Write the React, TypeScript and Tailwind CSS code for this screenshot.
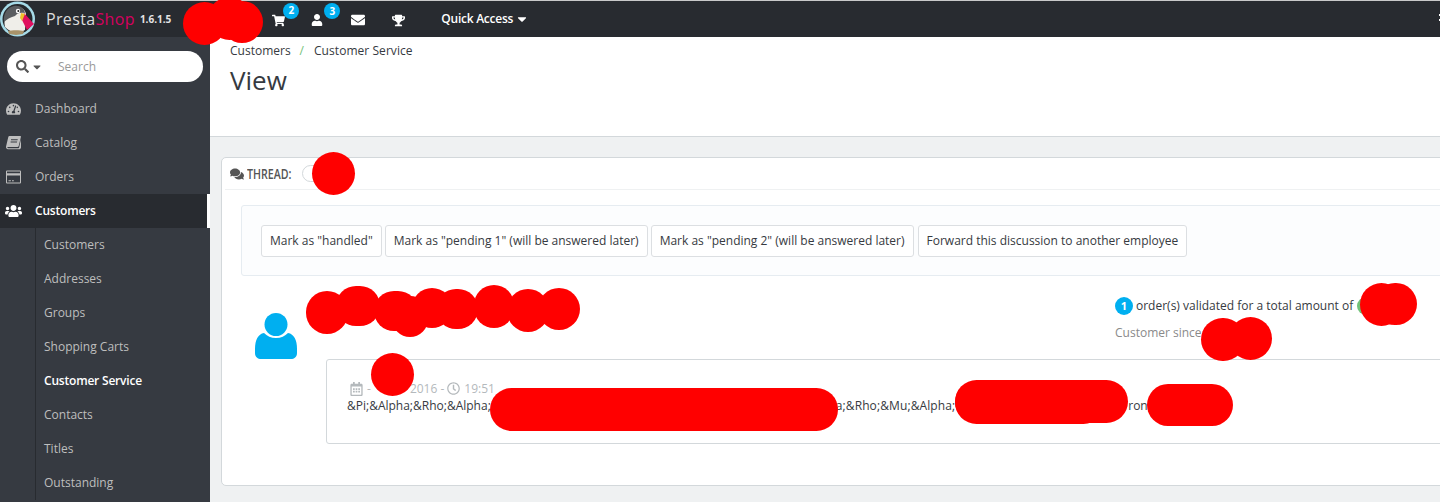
import React from 'react';
import { FaSearch, FaCaretDown, FaShoppingCart, FaUser, FaEnvelope, FaTrophy, FaTachometerAlt, FaUsers, FaComments, FaRegCalendarAlt, FaRegClock } from 'react-icons/fa';

function BookIcon({ className }: { className?: string }) {
  return (
    <svg viewBox="0 0 15 14" className={className} fill="currentColor">
      <path d="M3.4 0h10.8c.6 0 .8.4.7.9l-2.2 9c-.2.7-.6 1-1.3 1H1.9c-.4 0-.6.3-.6.6 0 .4.3.7.8.7h10.2c.4 0 .7-.2.8-.6L15 3.2v8.2c-.2.9-.9 1.8-2 1.8L2 13.200c-1.300 0-2-1-2-2.200 0-.3 0-.5.100-.8L2.300.9C2.500.3 2.800 0 3.400 0zM5 3.200v1h6.500l.3-1H5zM4.600 5.400v1h6.300l.3-1H4.600z" />
    </svg>
  );
}

function CardIcon({ className }: { className?: string }) {
  return (
    <svg viewBox="0 0 15 13" className={className} fill="currentColor">
      <path d="M1 0h13a1 1 0 0 1 1 1v11a1 1 0 0 1-1 1H1a1 1 0 0 1-1-1V1a1 1 0 0 1 1-1zm0 1v1.800h13V1H1zm0 4v7h13V5H1zm1.500 4.800h2.400v1H2.500v-1zm3.500 0h1.800v1H6v-1z" />
    </svg>
  );
}

const mainMenu = [
  { label: 'Dashboard', Icon: FaTachometerAlt },
  { label: 'Catalog', Icon: BookIcon },
  { label: 'Orders', Icon: CardIcon },
];

const subMenu = ['Customers', 'Addresses', 'Groups', 'Shopping Carts', 'Customer Service', 'Contacts', 'Titles', 'Outstanding'];

const actions = [
  'Mark as "handled"',
  'Mark as "pending 1" (will be answered later)',
  'Mark as "pending 2" (will be answered later)',
  'Forward this discussion to another employee',
];

// the red blobs painted over the screenshot: [left, top, width, height]
const blobs = [
  [183, 2, 43, 43], [208, -3, 43, 43], [221, 1, 42, 42],
  [312, 152, 43, 43],
  [306, 291, 42, 43], [336, 286, 44, 40], [374, 291, 44, 40], [392, 296, 36, 41], [412, 288, 40, 40], [436, 289, 42, 40], [474, 285, 40, 43], [507, 289, 42, 43], [538, 288, 42, 42],
  [371, 353, 43, 43],
  [490, 388, 348, 43], [955, 380, 173, 43], [955, 381, 150, 43], [1147, 384, 86, 42],
  [1360, 283, 43, 43], [1374, 283, 43, 42],
  [1201, 318, 44, 43], [1229, 317, 43, 43],
];

function Logo() {
  return (
    <svg width="36" height="36" viewBox="0 0 36 36" className="shrink-0">
      <circle cx="17.500" cy="18" r="17.500" fill="#a6dbe8" />
      <circle cx="17.500" cy="18" r="15" fill="#25282c" />
      <path d="M5 26c-2-9 1-18 9-20 6-1 11 2 12 7l-1 16c-6 4-15 3-20-3z" fill="#efeee9" />
      <path d="M4 21c-1-8 3-15 10-16 6-1 10 2 11 7-5-1-8 0-10 3-4 1-8 3-11 6z" fill="#5a5d60" />
      <circle cx="18" cy="10" r="2.200" fill="#fff" />
      <circle cx="18.300" cy="10" r="1" fill="#222" />
      <path d="M24 12l10 11-7 6-5-10z" fill="#e0105f" />
      <path d="M21 12l4 1-3 7-2-3z" fill="#f0c02c" />
      <path d="M8 30c4-1 12-1 16 0l-1 3-7 1-7-1z" fill="#a8936a" />
    </svg>
  );
}

function CountBadge({ n, className }: { n: number; className: string }) {
  return (
    <span className={`absolute -top-[11px] flex h-[16px] w-[16px] items-center justify-center rounded-full bg-[#00aff0] text-[10px] font-bold text-white ${className}`}>
      {n}
    </span>
  );
}

function TopBar() {
  return (
    <div className="flex h-[37px] shrink-0 items-center border-t border-[#c9c9c9] bg-[#282b30] text-white">
      <Logo />
      <span className="ml-[10px] text-[16px] tracking-[0.35px] text-[#dcdcdc]">
        Presta<span className="text-[#d6005f]">Shop</span>
      </span>
      <span className="ml-[5px] text-[10px] font-bold text-[#e4e4e4]">1.6.1.5</span>
      <span className="relative ml-[101px] mt-[2px]">
        <FaShoppingCart className="text-[13px]" />
        <CountBadge n={2} className="-right-[14px]" />
      </span>
      <span className="relative ml-[26px] mt-[2px]">
        <FaUser className="text-[12px]" />
        <CountBadge n={3} className="-right-[17px]" />
      </span>
      <FaEnvelope className="ml-[28px] mt-[2px] text-[14px]" />
      <FaTrophy className="ml-[27px] mt-[2px] text-[13px]" />
      <span className="ml-[36px] text-[12px] font-semibold tracking-[-0.25px]">Quick Access</span>
      <FaCaretDown className="ml-[2px] text-[14px]" />
      <div className="ml-auto mt-[-3px] h-[7px] w-[1px] border-y-[2px] border-white"></div>
    </div>
  );
}

function Sidebar() {
  return (
    <div className="h-full w-[210px] shrink-0 bg-[#363a41] text-[12px] text-[#bebebe]">
      <div className="px-[7px] pb-[10px] pt-[14px]">
        <div className="flex h-[31px] items-center rounded-full bg-white pl-[9px] text-[#555]">
          <FaSearch className="text-[13px]" />
          <FaCaretDown className="ml-[2px] text-[12px]" />
          <span className="ml-[15px] text-[12px] text-[#999]">Search</span>
        </div>
      </div>
      {mainMenu.map(({ label, Icon }) => (
        <div key={label} className="flex h-[34px] items-center pl-[6px]">
          <Icon className="h-[14px] w-[15px]" />
          <span className="ml-[14px]">{label}</span>
        </div>
      ))}
      <div className="flex h-[34px] items-center border-r-[3px] border-white bg-[#282b30] pl-[5px] font-semibold text-white">
        <FaUsers className="h-[14px] w-[17px]" />
        <span className="ml-[13px] tracking-[-0.2px]">Customers</span>
      </div>
      <div className="ml-[35px] border-l border-[#282b30] pl-[8px]">
        {subMenu.map((item) => (
          <div
            key={item}
            className={item === 'Customer Service' ? 'flex h-[34px] items-center font-semibold tracking-[-0.2px] text-white' : 'flex h-[34px] items-center'}
          >
            {item}
          </div>
        ))}
      </div>
    </div>
  );
}

function Thread() {
  return (
    <div className="ml-[11px] mt-[20px] w-[1300px] rounded-[5px] border border-[#d3d8db] bg-white pb-[41px] text-[12px] text-[#363a41]">
      <div className="mx-[3px] flex h-[32px] items-center border-b border-[#eff1f2] pl-[5px]">
        <FaComments className="text-[14px] text-[#555]" />
        <span className="ml-[3px] inline-block w-[46px] origin-left scale-x-[0.76] whitespace-nowrap text-[14px] font-semibold text-[#555]">THREAD:</span>
        <span className="ml-[9px] h-[17px] w-[20px] rounded-full border border-[#d3d8db]"></span>
      </div>
      <div className="ml-[19px] mt-[15px]">
        <div className="flex h-[71px] items-center gap-[3px] rounded-[3px] border border-[#e6ecf1] bg-[#fcfdfe] pl-[19px]">
          {actions.map((text) => (
            <button key={text} className="h-[32px] rounded-[3px] border border-[#dcdfe2] bg-white px-[8px] text-[12px] text-[#363a41] last:ml-px">
              {text}
            </button>
          ))}
        </div>
        <div className="flex h-[83px]">
          <svg viewBox="0 0 42 46" className="ml-[14px] mt-[37px] h-[46px] w-[42px] text-[#00aff0]" fill="currentColor">
            <circle cx="21" cy="11.500" r="11.500" />
            <path d="M9 20c3 3 7 5 12 5s9-2 12-5c6 1 9 7 9 16v4c0 4-3 6-6 6H6c-3 0-6-2-6-6v-4c0-9 3-15 9-16z" />
          </svg>
          <div className="ml-[818px] mt-[20px]">
            <div className="flex h-[20px] items-center">
              <span className="flex h-[18px] w-[18px] items-center justify-center rounded-full bg-[#00aff0] text-[11px] font-bold text-white">1</span>
              <span className="ml-[3px]">order(s) validated for a total amount of</span>
              <span className="ml-[4px] h-[18px] w-[14px] rounded-l-full bg-[#72c279]"></span>
            </div>
            <div className="mt-[8px] text-[#8a8a8a]">Customer since</div>
          </div>
        </div>
        <div className="ml-[85px] h-[85px] rounded-[3px] border border-[#d3d8db] pl-[20px] pt-[20px]">
          <div className="flex h-[17px] items-center text-[#b4b9bc]">
            <FaRegCalendarAlt className="ml-[3px] h-[14px] w-[13px]" />
            <span className="ml-[4px]">-</span>
            <span className="ml-[39px] font-medium">2016 -</span>
            <FaRegClock className="ml-[3px] text-[13px]" />
            <span className="ml-[4px] font-medium">19:51</span>
          </div>
          <div className="flex h-[17px] items-center whitespace-nowrap">
            <span>&amp;Pi;&amp;Alpha;&amp;Rho;&amp;Alpha;</span>
            <span className="ml-[345px] tracking-[0.1px]">a;&amp;Rho;&amp;Mu;&amp;Alpha;</span>
            <span className="ml-[173px]">ron;</span>
          </div>
        </div>
      </div>
    </div>
  );
}

export default function App() {
  return (
    <div className="relative flex h-[502px] w-[1440px] flex-col overflow-hidden bg-[#eff1f2] font-['Open_Sans',sans-serif]">
      <TopBar />
      <div className="flex min-h-0 flex-1">
        <Sidebar />
        <div className="min-w-0 flex-1 overflow-hidden">
          <div className="h-[100px] border-b border-[#d3d8db] bg-white pl-[20px] pt-[5px] text-[#363a41]">
            <div className="flex text-[12px]">
              <span>Customers</span>
              <span className="ml-[9px] text-[#72c279]">/</span>
              <span className="ml-[10px] tracking-[0.05px]">Customer Service</span>
            </div>
            <h1 className="mt-[2px] text-[26px] font-normal leading-[36px]">View</h1>
          </div>
          <Thread />
        </div>
      </div>
      {blobs.map(([left, top, width, height], i) => (
        <div key={i} className="absolute rounded-full bg-[#ff0000]" style={{ left, top, width, height }}></div>
      ))}
    </div>
  );
}
